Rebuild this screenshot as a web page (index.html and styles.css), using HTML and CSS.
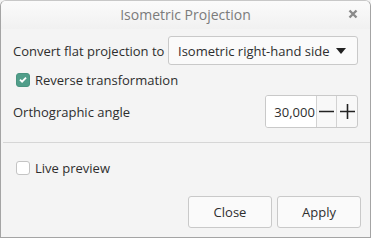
FILE: index.html
```html
<!DOCTYPE html>
<html>
<head>
<meta charset="utf-8">
<link rel="stylesheet" href="styles.css">
</head>
<body>
<div class="window">
  <div class="titlebar">
    <span class="title">Isometric Projection</span>
    <span class="close">
      <svg width="10" height="10" viewBox="0 0 10 10"><path d="M1.5 1.5 L8.5 8.5 M8.5 1.5 L1.5 8.5" stroke="#8a8a8a" stroke-width="2.4" stroke-linecap="butt"/></svg>
    </span>
  </div>
  <div class="content">
    <div class="row row-convert">
      <span class="label">Convert flat projection to</span>
      <div class="combo">
        <span class="combo-text">Isometric right-hand side</span>
        <svg class="arrow" width="10" height="6" viewBox="0 0 10 6"><path d="M0 0 H10 L5 6 Z" fill="#222"/></svg>
      </div>
    </div>
    <div class="row row-check">
      <span class="check checked">
        <svg width="13" height="13" viewBox="0 0 13 13"><path d="M3.2 6.6 L5.5 8.9 L9.8 4.4" stroke="#fff" stroke-width="2" fill="none"/></svg>
      </span>
      <span class="label">Reverse transformation</span>
    </div>
    <div class="row row-angle">
      <span class="label">Orthographic angle</span>
      <div class="spin">
        <span class="spin-value">30,000</span>
        <span class="spin-btn">
          <svg width="15" height="15" viewBox="0 0 15 15"><path d="M0 7.5 H15" stroke="#222" stroke-width="1.6"/></svg>
        </span>
        <span class="spin-btn">
          <svg width="15" height="15" viewBox="0 0 15 15"><path d="M0 7.5 H15 M7.5 0 V15" stroke="#222" stroke-width="1.6"/></svg>
        </span>
      </div>
    </div>
  </div>
  <div class="separator"></div>
  <div class="content lower">
    <div class="row row-live">
      <span class="check"></span>
      <span class="label">Live preview</span>
    </div>
  </div>
  <div class="buttons">
    <button class="btn">Close</button>
    <button class="btn">Apply</button>
  </div>
</div>
</body>
</html>
```

FILE: styles.css
```css
html, body {
  margin: 0;
  padding: 0;
  background: #f4f4f4;
}
body {
  font-family: "Open Sans", "Noto Sans", sans-serif;
  font-size: 13px;
  color: #2e2e2e;
}
.window {
  box-sizing: border-box;
  width: 371px;
  height: 238px;
  border: 1px solid #a4a4a4;
  border-top-color: #c8c8c8;
  border-radius: 6px 6px 0 0;
  background: #f4f4f4;
  display: flex;
  flex-direction: column;
  overflow: hidden;
}
.titlebar {
  height: 28px;
  flex: none;
  background: linear-gradient(#fbfbfb, #f1f1f1);
  display: flex;
  align-items: center;
  justify-content: center;
  position: relative;
}
.title {
  font-size: 14px;
  color: #7b7b7b;
  margin-top: -2px;
}
.close {
  position: absolute;
  right: 12px;
  top: 8px;
  display: flex;
}
.content {
  padding: 7px 12px 0 12px;
  display: flex;
  flex-direction: column;
}
.row {
  display: flex;
  align-items: center;
}
.row-convert {
  height: 29px;
  justify-content: space-between;
}
.combo {
  box-sizing: border-box;
  width: 190px;
  height: 29px;
  border: 1px solid #c9c9c9;
  border-radius: 3px;
  background: #fafafa;
  display: flex;
  align-items: center;
  padding: 0 11px 0 9px;
  justify-content: space-between;
}
.combo-text {
  color: #2e2e2e;
}
.arrow {
  margin-top: 1px;
}
.row-check {
  height: 15px;
  margin-top: 7px;
  padding-left: 3px;
}
.check {
  box-sizing: border-box;
  width: 14px;
  height: 14px;
  border-radius: 3px;
  border: 1px solid #c4c4c4;
  background: #fff;
  margin-right: 5px;
  display: flex;
  align-items: center;
  justify-content: center;
}
.check.checked {
  background: #519e8a;
  border-color: #4a9480;
}
.row-angle {
  height: 33px;
  margin-top: 8px;
  justify-content: space-between;
}
.spin {
  box-sizing: border-box;
  width: 93px;
  height: 33px;
  border: 1px solid #c9c9c9;
  border-radius: 3px;
  background: #f8f8f8;
  display: flex;
  overflow: hidden;
}
.spin-value {
  background: #fff;
  width: 51px;
  display: flex;
  align-items: center;
  justify-content: flex-end;
  padding-right: 1px;
  box-sizing: border-box;
}
.spin-btn {
  width: 20px;
  border-left: 1px solid #d2d2d2;
  display: flex;
  align-items: center;
  justify-content: center;
}
.separator {
  height: 1px;
  background: #d6d6d6;
  margin-top: 14px;
  margin-left: 2px;
}
.lower {
  padding-top: 17px;
}
.row-live {
  height: 15px;
  padding-left: 3px;
}
.buttons {
  display: flex;
  justify-content: flex-end;
  gap: 5px;
  padding-right: 9px;
  margin-top: 21px;
}
.btn {
  box-sizing: border-box;
  width: 84px;
  height: 32px;
  border: 1px solid #c9c9c9;
  border-radius: 3px;
  background: #fafafa;
  font-family: inherit;
  font-size: 13px;
  color: #2e2e2e;
  padding: 0;
}
```
